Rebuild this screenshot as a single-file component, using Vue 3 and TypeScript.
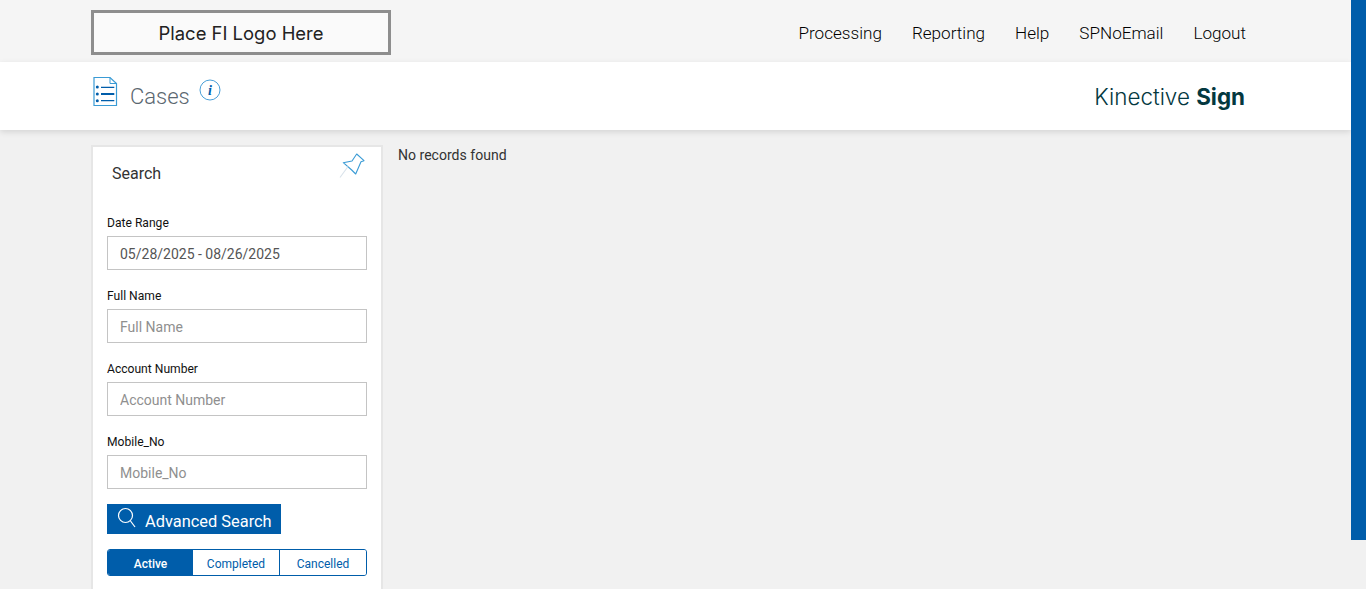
<script setup lang="ts">
interface Field { label: string; placeholder: string; value?: string }
const navItems: string[] = ['Processing', 'Reporting', 'Help', 'SPNoEmail', 'Logout']
const fields: Field[] = [
  { label: 'Date Range', placeholder: 'Date Range', value: '05/28/2025 - 08/26/2025' },
  { label: 'Full Name', placeholder: 'Full Name' },
  { label: 'Account Number', placeholder: 'Account Number' },
  { label: 'Mobile_No', placeholder: 'Mobile_No' }
]
const tabs: string[] = ['Active', 'Completed', 'Cancelled']
</script>

<template>
  <div class="page">
    <header class="topbar">
      <div class="logo">Place FI Logo Here</div>
      <nav class="nav">
        <a v-for="item in navItems" :key="item" class="nav-link">{{ item }}</a>
      </nav>
    </header>
    <section class="subbar">
      <div class="title">
        <svg class="doc-icon" width="26" height="31" viewBox="0 0 26 31" fill="none">
          <path d="M2 1.5H18L24.5 7.5V29.5H2Z" stroke="#3a9bd5" stroke-width="1.2" />
          <path d="M18 1.5V7.5H24.5" stroke="#3a9bd5" stroke-width="1" />
          <circle cx="5.3" cy="11" r="1.5" fill="#005daa" />
          <circle cx="5.3" cy="18" r="1.5" fill="#005daa" />
          <circle cx="5.3" cy="24.7" r="1.5" fill="#005daa" />
          <path d="M9 11.3H22.3M9 24.7H22.3" stroke="#005daa" stroke-width="1.2" />
          <path d="M9 18H22.3" stroke="#005daa" stroke-width="2" />
        </svg>
        <h1 class="cases">Cases</h1>
        <svg class="info-icon" width="22" height="22" viewBox="0 0 22 22" fill="none">
          <circle cx="11" cy="11" r="10" stroke="#4a9fd8" stroke-width="1" />
          <text x="11" y="15.5" text-anchor="middle" class="info-i">i</text>
        </svg>
      </div>
      <div class="brand">Kinective <strong>Sign</strong></div>
    </section>
    <main class="content">
      <aside class="panel">
        <div class="panel-head">
          <h2 class="panel-title">Search</h2>
          <svg class="pin" width="26" height="26" viewBox="0 0 26 26" fill="none">
            <path d="M17.7 1L25 7.7L22 8.7L16.7 21L12.7 17L4.3 9.7L13 8Z" stroke="#3a9bd5" stroke-width="1.1" stroke-linejoin="round" />
            <path d="M9 13.5L1 24.5" stroke="#d8e2ea" stroke-width="1.1" />
          </svg>
        </div>
        <div v-for="f in fields" :key="f.label" class="field">
          <label class="field-label">{{ f.label }}</label>
          <input class="field-input" type="text" :placeholder="f.placeholder" :value="f.value" />
        </div>
        <button class="adv" type="button">
          <svg width="20" height="22" viewBox="0 0 20 22" fill="none">
            <circle cx="8.5" cy="8.5" r="7" stroke="#fff" stroke-width="1.2" />
            <path d="M13.5 14L18 20" stroke="#fff" stroke-width="1.2" />
          </svg>
          <span class="adv-label">Advanced Search</span>
        </button>
        <div class="tabs">
          <button v-for="(t, i) in tabs" :key="t" type="button" class="tab" :class="{ on: i === 0 }">{{ t }}</button>
        </div>
      </aside>
      <p class="empty">No records found</p>
    </main>
    <div class="side-bar"></div>
  </div>
</template>

<style>
html, body { margin: 0; height: 100%; overflow: hidden; }
</style>

<style scoped>
.page {
  position: relative;
  width: 1366px;
  height: 589px;
  overflow: hidden;
  background: #f1f1f1;
  font-family: Roboto, "Liberation Sans", sans-serif;
}
.side-bar {
  position: absolute;
  top: 0;
  right: 0;
  width: 15px;
  height: 540px;
  background: #005daa;
}
.topbar {
  width: 1351px;
  height: 62px;
  box-sizing: border-box;
  padding: 10px 105px 0 91px;
  background: #f5f5f5;
  display: flex;
  justify-content: space-between;
  align-items: flex-start;
}
.logo {
  width: 300px;
  height: 45px;
  box-sizing: border-box;
  border: 3px solid #8e8e8e;
  background: #fafafa;
  display: flex;
  align-items: center;
  justify-content: center;
  font-family: Inter, sans-serif;
  font-size: 18.45px;
  color: #222;
}
.nav {
  display: flex;
  gap: 30px;
  padding-top: 13px;
}
.nav-link {
  font-size: 17.1px;
  font-weight: 300;
  line-height: 20px;
  color: #000;
}
.subbar {
  width: 1351px;
  height: 68px;
  box-sizing: border-box;
  padding: 0 106px 0 91px;
  background: #fff;
  box-shadow: 0 2px 6px rgba(0, 0, 0, 0.12);
  display: flex;
  justify-content: space-between;
  position: relative;
}
.title {
  display: flex;
  align-items: flex-start;
}
.doc-icon { margin-top: 14px; flex: none; margin-left: 1px; }
.cases {
  margin: 21px 0 0 12px;
  font-size: 22px;
  font-weight: 300;
  line-height: 28px;
  color: #5b6770;
}
.info-icon { margin: 17px 0 0 9px; }
.info-i {
  font-family: "Liberation Serif", serif;
  font-size: 14px;
  font-style: italic;
  font-weight: 700;
  fill: #005daa;
}
.brand {
  margin-top: 20px;
  font-family: Inter, sans-serif;
  font-size: 22.4px;
  font-weight: 300;
  line-height: 30px;
  color: #04383f;
}
.brand strong { font-weight: 700; }
.content {
  width: 1351px;
  box-sizing: border-box;
  padding: 15px 0 0 91px;
  display: flex;
  align-items: flex-start;
}
.panel {
  width: 292px;
  height: 460px;
  flex: none;
  box-sizing: border-box;
  padding: 0 14px;
  background: #fff;
  border: 2px solid #e6e6e6;
  border-bottom: 0;
}
.panel-head {
  position: relative;
  height: 69px;
}
.panel-title {
  margin: 0;
  padding: 17px 0 0 5px;
  font-size: 16px;
  font-weight: 400;
  line-height: 20px;
  color: #333;
}
.pin {
  position: absolute;
  top: 6px;
  right: 2px;
}
.field { height: 73px; }
.field-label {
  display: block;
  font-size: 12.1px;
  line-height: 14px;
  height: 20px;
  color: #111;
}
.field-input {
  display: block;
  width: 260px;
  height: 34px;
  box-sizing: border-box;
  padding: 2px 12px 0;
  border: 1px solid #c4c4c4;
  border-radius: 0;
  outline: none;
  font-family: inherit;
  font-size: 14px;
  color: #555;
  background: #fff;
}
.field-input::placeholder { color: #8f8f8f; opacity: 1; }
.adv {
  display: flex;
  align-items: center;
  gap: 8px;
  height: 30px;
  width: 174px;
  box-sizing: border-box;
  padding: 0 0 0 10px;
  margin-top: -4px;
  border: 0;
  background: #005daa;
  color: #fff;
  font-family: inherit;
  font-size: 16.4px;
  font-weight: 400;
  white-space: nowrap;
}
.adv svg { margin-top: -3px; }
.adv-label { padding-top: 4px; }
.tabs {
  display: flex;
  width: 260px;
  height: 27px;
  margin-top: 15px;
  box-sizing: border-box;
  border: 1px solid #005daa;
  border-radius: 3px;
  overflow: hidden;
}
.tab {
  flex: none;
  width: 86px;
  border: 0;
  padding: 2px 0 0;
  background: #fff;
  color: #005daa;
  font-family: inherit;
  font-size: 12px;
}
.tab:nth-child(1) { width: 85px; }
.tab:nth-child(2) { width: 87px; border-right: 1px solid #005daa; }
.tab.on {
  background: #005daa;
  color: #fff;
  font-weight: 500;
}
.empty {
  margin: 0 0 0 15px;
  font-size: 14.05px;
  line-height: 20px;
  color: #333;
}
</style>
